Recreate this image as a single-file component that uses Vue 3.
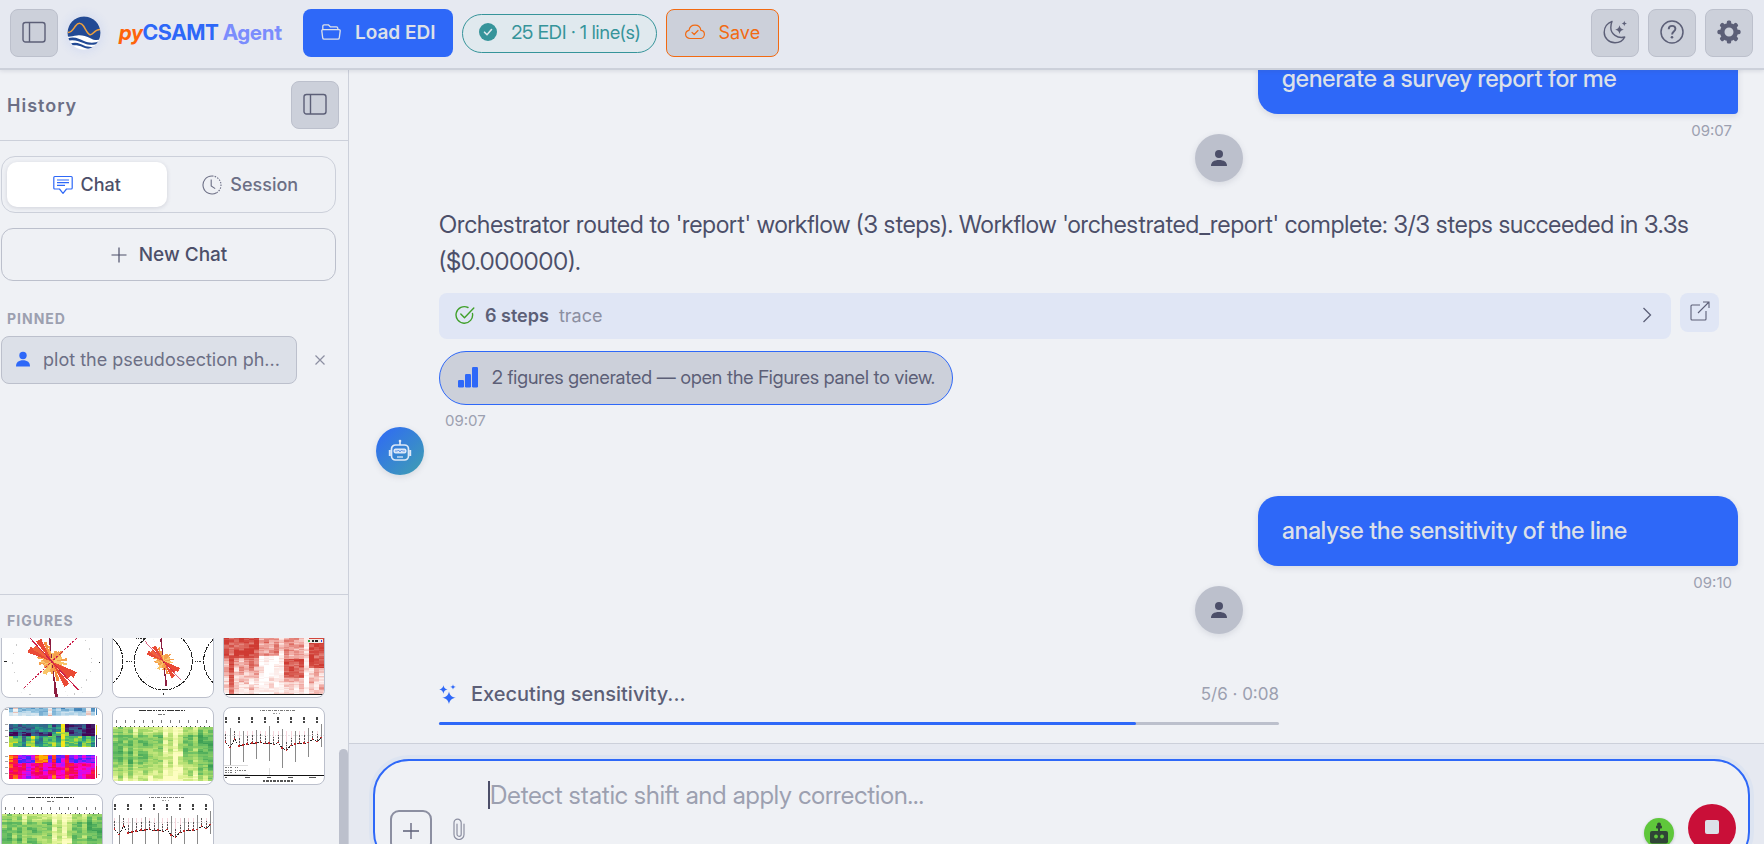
<script setup>
import { ref } from 'vue'

const tab = ref('chat')
const draft = ref('')

const progress = { done: 5, total: 6, elapsed: '0:08' }

/* ---------- thumbnail plots ---------- */

// small seeded generator, so the plots are stable between renders
function seeded(seed) {
  let s = seed
  return () => {
    s = (s * 1664525 + 1013904223) % 4294967296
    return s / 4294967296
  }
}

function mix(a, b, t) {
  const pa = [1, 3, 5].map((i) => parseInt(a.slice(i, i + 2), 16))
  const pb = [1, 3, 5].map((i) => parseInt(b.slice(i, i + 2), 16))
  return `rgb(${pa.map((v, i) => Math.round(v + (pb[i] - v) * t)).join(',')})`
}

function ramp(colors, v) {
  const t = Math.max(0, Math.min(0.999, v)) * (colors.length - 1)
  const i = Math.floor(t)
  return mix(colors[i], colors[i + 1], t - i)
}

function heat({ x, y, w, h, cols, rows, seed, colors, value }) {
  const rnd = seeded(seed)
  const cells = []
  for (let c = 0; c < cols; c++) {
    let drift = 0
    for (let r = 0; r < rows; r++) {
      drift = drift * 0.6 + (rnd() - 0.5) * 0.35
      cells.push({
        x: x + (c * w) / cols,
        y: y + (r * h) / rows,
        w: w / cols + 0.5,
        h: h / rows + 0.5,
        fill: ramp(colors, value(c / cols, r / rows, c) + drift)
      })
    }
  }
  return cells
}

const greenCols = [0.6, 0.75, 0.5, 0.65, 0.5, 0.65, 0.62, 0.45, 0.5, 0.55, 0.15, 0.35, 0.08, 0.2, 0.62, 0.6, 0.45, 0.8, 0.72, 0.88]
const green = heat({
  x: 0, y: 57, w: 300, h: 162, cols: 20, rows: 34, seed: 7,
  colors: ['#fdfdc0', '#d9ef8b', '#a6d96a', '#66bd63', '#3c9f55'],
  value: (u, v, c) => greenCols[c] + (v < 0.12 ? -0.15 : 0.06) - Math.max(0, v - 0.6) * 1.1
})

const red = heat({
  x: 0, y: 0, w: 300, h: 219, cols: 20, rows: 60, seed: 21,
  colors: ['#ffffff', '#fbe3df', '#f0a9a2', '#dc6a60', '#cf3a32'],
  value: (u, v, c) => {
    if (c === 1) return 0.85
    if (u < 0.35) return v < 0.5 ? 0.9 : 0.62 - (v - 0.5) * 0.9
    if (u < 0.52) return v < 0.48 ? 0.6 : 0.08
    if (c === 11 || c === 16) return 0.2
    if (u > 0.82) return v < 0.65 ? 0.88 : 0.35
    return v > 0.5 && v < 0.78 ? 0.85 : 0.5 - Math.max(0, v - 0.78) * 1.5
  }
})

const strips = [
  ...heat({
    x: 21, y: 0, w: 258, h: 24, cols: 20, rows: 6, seed: 5,
    colors: ['#3d7fb5', '#8fc1de', '#c9e0ee', '#f4f4f4', '#d8745c'],
    value: (u, v, c) => (c === 1 || c === 9 || c === 18 ? 0.85 : 0.15 + v * 0.45)
  }),
  ...heat({
    x: 21, y: 48, w: 258, h: 69, cols: 20, rows: 18, seed: 11,
    colors: ['#440154', '#3b528b', '#21918c', '#5ec962', '#f4e61e'],
    value: (u, v, c) => {
      if (c === 12) return 1
      if (v > 0.3 && v < 0.5) return c > 9 && c < 14 ? 0.8 : 0.12
      if (v < 0.3) return u > 0.55 ? 0.12 : 0.4
      return 0.7 + (c % 5 === 0 ? 0.25 : 0) - (c % 4 === 3 ? 0.2 : 0)
    }
  }),
  ...heat({
    x: 21, y: 141, w: 258, h: 72, cols: 20, rows: 18, seed: 31,
    colors: ['#ffb000', '#ff2a2a', '#f00060', '#ff00c8', '#c010ff', '#3030ff'],
    value: (u, v, c) => {
      if (c < 2 || c === 10 || c === 13) return 0.25
      if (v < 0.3) return u > 0.25 && u < 0.45 ? 0.05 : 0.88
      return 0.5 + (c % 4 === 0 ? 0.2 : 0)
    }
  })
]

// rose diagram petals: angle in degrees, length, half width, colour
const petals = []
const petalRnd = seeded(3)
for (let a = 0; a < 360; a += 9) {
  petals.push([a, 22 + petalRnd() * 26, 4, petalRnd() > 0.5 ? '#f9c56a' : '#f5a04c'])
}
petals.push(
  [208, 78, 10, '#ea4a35'], [220, 68, 9, '#f0623b'], [238, 76, 9, '#ea4a35'], [250, 62, 5, '#f5903f'],
  [30, 80, 10, '#ea4a35'], [42, 70, 10, '#ea4a35'], [58, 84, 9, '#ea4a35'], [72, 60, 5, '#f5903f'],
  [264, 100, 4, '#8c1d40'], [83, 112, 5, '#8c1d40']
)
function petal([deg, len, half]) {
  const a = (deg * Math.PI) / 180
  const c = Math.cos(a)
  const s = Math.sin(a)
  return `0,0 ${c * len - s * half},${s * len + c * half} ${c * len + s * half},${s * len - c * half}`
}

const points = [
  [5, 103], [19, 119], [32, 93], [45, 115], [58, 111], [70, 109], [84, 106], [97, 105], [110, 103], [123, 107],
  [136, 106], [149, 110], [162, 104], [175, 121], [188, 126], [201, 113], [214, 108], [227, 106], [240, 106],
  [253, 104], [266, 93], [279, 101], [292, 89]
]
const bars = [
  [19, 59, 170], [58, 69, 162], [97, 66, 153], [136, 54, 158], [175, 64, 179], [214, 69, 162], [253, 59, 146], [292, 49, 116]
]
const curve = points.map((p) => p.join(',')).join(' ')

const figures = [
  { id: 1, kind: 'rose', label: 'Rose diagram' },
  { id: 2, kind: 'roses', label: 'Rose diagrams by band' },
  { id: 3, kind: 'red', label: 'Skew section' },
  { id: 4, kind: 'strips', label: 'Multi-parameter section' },
  { id: 5, kind: 'green', label: 'Pseudosection' },
  { id: 6, kind: 'curve', label: 'Station profile' },
  { id: 7, kind: 'green', label: 'Pseudosection copy' },
  { id: 8, kind: 'curve', label: 'Station profile copy' }
]
</script>

<template>
  <div class="app">
    <header class="topbar">
      <button class="icon-btn" type="button" aria-label="Toggle sidebar">
        <svg class="i24" viewBox="0 0 24 24" fill="none" stroke="currentColor" stroke-width="1.4">
          <rect x="1" y="2.5" width="22" height="19.5" rx="2.5" /><path d="M7.5 2.5v19.5" />
        </svg>
      </button>
      <div class="brand">
        <svg class="logo" viewBox="0 0 34 34" aria-hidden="true">
          <defs><clipPath id="logo-clip"><circle cx="17" cy="17" r="16.5" /></clipPath></defs>
          <g clip-path="url(#logo-clip)">
            <rect width="34" height="34" fill="#fff" />
            <path d="M0 0h34v23c-4 2-7 1-10-.5-6-3-10-3.500-14-3-4 .5-7 1.500-10 1z" fill="#234a94" />
            <path d="M0 22.500c8-2.500 12 .5 17 2.500s10 2.500 17-.5v2c-6 3-12 3-17 .8S6 23 0 25z" fill="#234a94" />
            <path d="M3 27.500c7-2 10 .3 14 2s9 2 13 .5l-3 2.500c-4 .7-7 .3-11-1.300s-7-2.200-12-1.700z" fill="#234a94" />
            <path d="M1 16.500c4 0 5-3 7.500-6.500 3-4 6-3 8 0 2.500 4 4 7.500 6 8.500 4 1.500 4-5.500 11-5" fill="none" stroke="#efa03d" stroke-width="1.500" />
          </g>
        </svg>
        <div class="brand-name"><em>py</em>CSAMT <span>Agent</span></div>
      </div>
      <button class="load-btn" type="button">
        <svg class="i20" viewBox="0 0 20 20" fill="none" stroke="currentColor" stroke-width="1.3" stroke-linejoin="round">
          <path d="M1.800 8V4.200c0-.8.500-1.400 1.300-1.400h4.200l2 2h6c.9 0 1.500.6 1.500 1.400V8" />
          <path d="M2 7.600h16c.8 0 1.300.6 1.200 1.300l-.9 7c-.1.800-.7 1.300-1.500 1.300H3.200c-.8 0-1.400-.5-1.500-1.300l-.9-7C.7 8.200 1.200 7.600 2 7.600z" />
        </svg>
        Load EDI
      </button>
      <div class="status-pill">
        <svg class="i18" viewBox="0 0 18 18"><circle cx="9" cy="9" r="9" fill="currentColor" /><path d="M5.500 9.200l2.500 2.500 4.500-5.200" fill="none" stroke="#e0e9ee" stroke-width="1.600" stroke-linecap="round" /></svg>
        25 EDI · 1 line(s)
      </div>
      <button class="save-btn" type="button">
        <svg class="i20" viewBox="0 0 20 20" fill="none" stroke="currentColor" stroke-width="1.200" stroke-linecap="round" stroke-linejoin="round">
          <path d="M5 16.500c-2.400 0-4.400-1.800-4.400-4.100 0-2 1.500-3.600 3.400-4C4.500 5.200 7 3.200 10 3.200c3.100 0 5.500 2.200 5.900 5.100 2 .2 3.500 1.800 3.500 4 0 2.300-1.900 4.200-4.200 4.200z" />
          <path d="M7 10.300l2.200 2.200 3.800-4" />
        </svg>
        Save
      </button>
      <div class="top-actions">
        <button class="icon-btn" type="button" aria-label="Dark mode">
          <svg class="i24" viewBox="0 0 24 24" fill="none" stroke="currentColor" stroke-width="1.400" stroke-linejoin="round">
            <path d="M9 1.500C4.500 3 1.200 7.200 1.200 12.200c0 6 4.900 10.600 10.800 10.600 4.300 0 8-2.300 9.800-5.800-7.500 2-14-3-14-9.500 0-2.200.4-4.200 1.200-6z" />
            <path fill="currentColor" stroke="none" d="M16.500 5.300c.7 2.900 1.500 3.700 4.300 4.400-2.800.7-3.600 1.500-4.300 4.400-.7-2.900-1.500-3.700-4.300-4.400 2.800-.7 3.600-1.500 4.300-4.400zM21.300.8c.5 1.800.9 2.300 2.700 2.800-1.800.5-2.200.9-2.700 2.700-.5-1.800-.9-2.200-2.700-2.700 1.800-.5 2.200-1 2.700-2.800z" />
          </svg>
        </button>
        <button class="icon-btn" type="button" aria-label="Help">
          <svg class="i24" viewBox="0 0 24 24" fill="none" stroke="currentColor" stroke-width="1.500">
            <circle cx="12" cy="12" r="11" /><path d="M8.700 9.200c.1-2.200 1.500-3.300 3.400-3.300s3.300 1.200 3.300 2.900c0 2.600-3.300 2.800-3.300 5.600" stroke-width="1.900" /><circle cx="12" cy="17.300" r="1.300" fill="currentColor" stroke="none" />
          </svg>
        </button>
        <button class="icon-btn" type="button" aria-label="Settings">
          <svg class="i24" viewBox="0 0 24 24" fill="none">
            <g fill="currentColor">
              <rect v-for="n in 8" :key="n" x="9.800" y="0.400" width="4.400" height="6" rx="1.600" :transform="`rotate(${n * 45} 12 12)`" />
            </g>
            <circle cx="12" cy="12" r="6.800" stroke="currentColor" stroke-width="4.600" />
          </svg>
        </button>
      </div>
    </header>

    <div class="body">
      <aside class="sidebar">
        <div class="side-head">
          <h2>History</h2>
          <button class="icon-btn" type="button" aria-label="Collapse history">
            <svg class="i24" viewBox="0 0 24 24" fill="none" stroke="currentColor" stroke-width="1.400">
              <rect x="1" y="2.500" width="22" height="19.500" rx="2.500" /><path d="M7.500 2.500v19.500" />
            </svg>
          </button>
        </div>

        <div class="history">
          <div class="tabs">
            <button type="button" :class="{ active: tab === 'chat' }" @click="tab = 'chat'">
              <svg class="i20" viewBox="0 0 20 20" fill="none" stroke="currentColor" stroke-width="1.200" stroke-linejoin="round">
                <path d="M1.800 1.500h16.400c.6 0 1 .4 1 1v10.500c0 .6-.4 1-1 1h-4.700L10 18.300 6.500 14H1.800c-.6 0-1-.4-1-1V2.500c0-.6.400-1 1-1z" />
                <path d="M4 5h12M4 7.700h12M4 10.400h8" />
              </svg>
              Chat
            </button>
            <button type="button" :class="{ active: tab === 'session' }" @click="tab = 'session'">
              <svg class="i20" viewBox="0 0 20 20" fill="none" stroke="currentColor" stroke-width="1.100">
                <path d="M10 1a9 9 0 1 0 4.500 16.800" /><path d="M10 1a9 9 0 0 1 4.500 16.800" stroke-dasharray="1.500 1.200" /><path d="M9.200 4.500v6.500l4 2.600" />
              </svg>
              Session
            </button>
          </div>

          <button class="new-chat" type="button">
            <svg class="i18" viewBox="0 0 18 18" stroke="currentColor" stroke-width="1.200"><path d="M9 1.500v15M1.500 9h15" /></svg>
            New Chat
          </button>

          <h3>PINNED</h3>
          <div class="pinned">
            <button class="pinned-item" type="button">
              <svg class="i16" viewBox="0 0 16 16" fill="#2e68f8"><circle cx="8" cy="4.500" r="3.700" /><path d="M1 15.500c0-4 2.500-6.200 7-6.200s7 2.200 7 6.200z" /></svg>
              <span>plot the pseudosection ph...</span>
            </button>
            <button class="unpin" type="button" aria-label="Unpin">
              <svg viewBox="0 0 12 12" stroke="currentColor" stroke-width="1.200"><path d="M1.500 1.500l9 9M10.500 1.500l-9 9" /></svg>
            </button>
          </div>
        </div>

        <section class="figures">
          <h3>FIGURES</h3>
          <div class="fig-scroll">
            <div class="fig-grid">
              <button v-for="f in figures" :key="f.id" class="fig" type="button" :aria-label="f.label">
                <svg viewBox="0 0 300 228" shape-rendering="crispEdges">
                  <template v-if="f.kind === 'rose' || f.kind === 'roses'">
                    <template v-if="f.kind === 'roses'">
                      <circle v-for="cx in [-57, 151, 359]" :key="cx" :cx="cx" cy="120" r="87" fill="none" stroke="#222" stroke-width="3" stroke-dasharray="9 2" />
                      <path d="M40 120h20M245 120h20M151 217v6M68 52h34" stroke="#333" stroke-width="3" stroke-dasharray="4 3" />
                    </template>
                    <circle v-else cx="150" cy="122" r="118" fill="none" stroke="#c9c9c9" stroke-width="3" stroke-dasharray="4 24" />
                    <path v-if="f.kind === 'rose'" d="M6 121h9M290 124h4" stroke="#222" stroke-width="3" />
                    <g :transform="f.kind === 'rose' ? 'translate(150 122)' : 'translate(151 120) scale(.68)'">
                      <path d="M-96-96L96 96M96-96L-96 96M-60-130L60 130" stroke="#e4e4e4" stroke-width="2" stroke-dasharray="3 9" />
                      <polygon v-for="(p, i) in petals" :key="i" :points="petal(p)" :fill="p[3]" />
                      <path d="M-84-90L80 86" stroke="#cc1f4c" stroke-width="3" />
                      <path v-if="f.kind === 'rose'" d="M-84 78L78-74" stroke="#cc1f4c" stroke-width="3" stroke-dasharray="7 4" />
                    </g>
                  </template>

                  <template v-else-if="f.kind === 'red'">
                    <rect v-for="(c, i) in red" :key="i" :x="c.x" :y="c.y" :width="c.w" :height="c.h" :fill="c.fill" />
                    <rect x="248" y="53" width="50" height="14" fill="#f2ece6" />
                    <path d="M252 60h6" stroke="#35a046" stroke-width="6" />
                    <path d="M264 60h22" stroke="#222" stroke-width="4" stroke-dasharray="7 3" />
                    <path d="M290 60h5" stroke="#2d48e0" stroke-width="6" />
                    <path d="M0 221h300" stroke="#111" stroke-width="3" />
                  </template>

                  <template v-else-if="f.kind === 'strips'">
                    <rect v-for="(c, i) in strips" :key="i" :x="c.x" :y="c.y" :width="c.w" :height="c.h" :fill="c.fill" />
                    <path d="M284 0v20" stroke="#3a80b8" stroke-width="3" />
                    <path d="M284 50v32" stroke="#e8de20" stroke-width="3" /><path d="M284 82v34" stroke="#3a2a70" stroke-width="3" />
                    <path d="M284 144v30" stroke="#f020c0" stroke-width="3" /><path d="M284 174v36" stroke="#e02020" stroke-width="3" />
                    <path d="M9 4h9M9 50h9M9 66h9M9 84h9M9 102h9M9 144h9M9 160h9M9 178h9M9 196h9M288 92h8M288 200h6" stroke="#777" stroke-width="2" stroke-dasharray="5 2" />
                  </template>

                  <template v-else-if="f.kind === 'green'">
                    <path d="M78 8h138" stroke="#333" stroke-width="4" stroke-dasharray="11 2 7 3 3 2" />
                    <path d="M134 18h26" stroke="#777" stroke-width="3" stroke-dasharray="6 2" />
                    <path v-for="n in 11" :key="n" :d="`M${n * 27 - 17} 35v10`" stroke="#777" stroke-width="3" />
                    <path d="M8 54h290" stroke="#444" stroke-width="3" stroke-dasharray="3 11" />
                    <rect v-for="(c, i) in green" :key="i" :x="c.x" :y="c.y" :width="c.w" :height="c.h" :fill="c.fill" />
                  </template>

                  <template v-else>
                    <path d="M108 8h106" stroke="#777" stroke-width="3" stroke-dasharray="3 4 8 3" />
                    <path d="M148 17h24" stroke="#999" stroke-width="3" stroke-dasharray="4 4" />
                    <path v-for="n in 8" :key="n" :d="`M${n * 39 - 33} 26v19`" stroke="#444" stroke-width="4" stroke-dasharray="3 1" />
                    <path d="M0 83h300" stroke="#d8d8d8" stroke-width="2" stroke-dasharray="5 3" />
                    <path v-for="(p, i) in points" :key="'p' + i" :d="`M${p[0]} 68V${p[1]}`" stroke="#f6d5dc" stroke-width="3" />
                    <path v-for="(p, i) in points" :key="'k' + i" :d="`M${p[0]} ${p[1] - 24}v22`" stroke="#555" stroke-width="3" stroke-dasharray="5 3" />
                    <path v-for="b in bars" :key="b[0]" :d="`M${b[0]} ${b[1]}V${b[2]}`" stroke="#8a8a8a" stroke-width="3" />
                    <path d="M136 179v22" stroke="#ddd" stroke-width="3" />
                    <polyline :points="curve" fill="none" stroke="#222" stroke-width="3" stroke-dasharray="6 4" />
                    <rect v-for="p in points" :key="p[0]" :x="p[0] - 3" :y="p[1] - 3" width="5" height="5" fill="#c42a2a" />
                    <path d="M0 172h72M0 198h72" stroke="#ccc" stroke-width="2" />
                    <path d="M4 179h42M4 187h66M4 194h34" stroke="#777" stroke-width="3" stroke-dasharray="5 3 2 4" />
                    <path d="M0 202h300" stroke="#111" stroke-width="3" />
                    <path d="M4 209h6M64 209h14M130 209h10M192 209h16M256 209h20" stroke="#555" stroke-width="4" />
                    <path d="M116 219h92" stroke="#555" stroke-width="4" stroke-dasharray="6 3 10 2" />
                  </template>
                </svg>
              </button>
            </div>
            <div class="fig-track"><div class="fig-thumb"></div></div>
          </div>
        </section>
      </aside>

      <main class="main">
        <div class="messages">
          <article class="msg user">
            <div class="bubble">generate a survey report for me</div>
            <time>09:07</time>
            <div class="avatar">
              <svg class="i18" viewBox="0 0 18 18" fill="currentColor"><circle cx="9" cy="5" r="4" /><path d="M1 17c0-4 3-6 8-6s8 2 8 6z" /></svg>
            </div>
          </article>

          <article class="msg bot">
            <div class="answer">
              <p>Orchestrator routed to 'report' workflow (3 steps). Workflow 'orchestrated_report' complete: 3/3 steps succeeded in 3.3s ($0.000000).</p>
              <div class="trace-row">
                <button class="trace" type="button">
                  <svg class="i20" viewBox="0 0 20 20" fill="none" stroke="#40a02b" stroke-width="1.400" stroke-linecap="round" stroke-linejoin="round">
                    <path d="M17.500 8.500a8.300 8.300 0 1 1-4.500-6" /><path d="M5.800 9l3.700 3.800L18.800 3" />
                  </svg>
                  <strong>6 steps</strong>
                  <span>trace</span>
                  <svg class="i16 chevron" viewBox="0 0 16 16" fill="none" stroke="currentColor" stroke-width="1.300"><path d="M4.500 1l7 7-7 7" /></svg>
                </button>
                <button class="open-btn" type="button" aria-label="Open trace">
                  <svg class="i20" viewBox="0 0 20 20" fill="none" stroke="currentColor" stroke-width="1.100">
                    <path d="M10 4H2c-.6 0-1 .4-1 1v13c0 .6.400 1 1 1h13c.6 0 1-.4 1-1v-8" /><path d="M8 12L19 1M13 1h6v6" />
                  </svg>
                </button>
              </div>
              <button class="fig-chip" type="button">
                <svg class="i22" viewBox="0 0 22 22" fill="#2e68f8"><rect x="1" y="14" width="6" height="7.500" rx="1.200" /><rect x="8" y="8" width="6" height="13.500" rx="1.200" /><rect x="15" y="1" width="6" height="20.500" rx="1.200" /></svg>
                2 figures generated — open the Figures panel to view.
              </button>
              <time>09:07</time>
            </div>
            <div class="avatar">
              <svg class="i24" viewBox="0 0 24 24" fill="none" stroke="#dce8f8" stroke-width="1.700">
                <path d="M12 2.500V6" /><circle cx="12" cy="2" r="1.300" fill="#dce8f8" stroke="none" />
                <rect x="3.500" y="6" width="17" height="15" rx="4" /><path d="M1.800 11v6M22.200 11v6" stroke-width="2" />
                <rect x="5.500" y="9.500" width="13" height="5" rx="2" fill="#dce8f8" stroke="none" /><path d="M7 12h2.500l1-1 1.500 2 1.500-2 1 1H17" stroke="#3f7fe0" stroke-width=".8" /><path d="M9 18h6" stroke-width="1.300" />
              </svg>
            </div>
          </article>

          <article class="msg user">
            <div class="bubble">analyse the sensitivity of the line</div>
            <time>09:10</time>
            <div class="avatar">
              <svg class="i18" viewBox="0 0 18 18" fill="currentColor"><circle cx="9" cy="5" r="4" /><path d="M1 17c0-4 3-6 8-6s8 2 8 6z" /></svg>
            </div>
          </article>

          <div class="running">
            <div class="running-head">
              <svg class="i20" viewBox="0 0 20 20" fill="#2e68f8">
                <path d="M10 7.500c1 4.100 2.400 5.400 6.800 6.300-4.400.9-5.800 2.200-6.800 6.200-1-4-2.400-5.300-6.800-6.200 4.400-.9 5.800-2.200 6.800-6.300z" />
                <path d="M4.400 1.300c.6 2.700 1.500 3.500 4.200 4.200-2.700.6-3.600 1.500-4.200 4.200C3.800 7 2.900 6.100.2 5.500c2.700-.7 3.600-1.500 4.200-4.200zM14 .2c.4 1.800.9 2.300 2.800 2.700-1.900.4-2.400.9-2.800 2.700-.4-1.800-.9-2.300-2.800-2.700 1.900-.4 2.400-.9 2.800-2.700z" />
              </svg>
              <span class="running-label">Executing sensitivity...</span>
              <span class="running-time">{{ progress.done }}/{{ progress.total }} · {{ progress.elapsed }}</span>
            </div>
            <div class="bar"><div class="bar-fill" :style="{ width: Math.floor((progress.done / progress.total) * 100) + '%' }"></div></div>
          </div>
        </div>

        <div class="composer-wrap">
          <form class="composer" @submit.prevent>
            <button class="add-btn" type="button" aria-label="Add">
              <svg class="i18" viewBox="0 0 18 18" stroke="currentColor" stroke-width="1.300"><path d="M9 1v16M1 9h16" /></svg>
            </button>
            <button class="clip-btn" type="button" aria-label="Attach file">
              <svg viewBox="0 0 12 22" fill="none" stroke="currentColor" stroke-width="1.200" stroke-linecap="round">
                <path d="M11 6v10.500a5 5 0 0 1-10 0V4.800a3.600 3.600 0 0 1 7.200 0v11.400a2.100 2.100 0 0 1-4.200 0V6" />
              </svg>
            </button>
            <div class="draft">
              <span v-if="!draft" class="caret"></span>
              <textarea v-model="draft" rows="2" aria-label="Message" placeholder="Detect static shift and apply correction..."></textarea>
            </div>
            <button class="agent-btn" type="button" aria-label="Agent mode">
              <svg class="i22" viewBox="0 0 22 22" fill="#2f4536">
                <rect x="2" y="9" width="18" height="12.500" rx="2" /><rect x="10" y="5" width="2" height="5" /><rect x="8" y="3.500" width="6" height="3" rx="1" /><circle cx="11" cy="2.500" r="2" />
                <circle cx="8" cy="14.500" r="1.900" fill="#5fc73b" /><circle cx="14" cy="14.500" r="1.900" fill="#5fc73b" />
              </svg>
            </button>
            <button class="stop-btn" type="button" aria-label="Stop"><span></span></button>
          </form>
        </div>
      </main>
    </div>
  </div>
</template>

<style>
body {
  overflow: hidden;
  background: #eff1f5;
}
</style>

<style scoped>
/* the shell is a little taller than the window: the composer runs off the bottom */
.app {
  display: flex;
  flex-direction: column;
  height: calc(100vh + 36px);
  font-family: Inter, "Liberation Sans", sans-serif;
  font-size: 18px;
  color: #4c4f69;
}
.app * {
  box-sizing: border-box;
}
button {
  font: inherit;
  color: inherit;
  margin: 0;
  padding: 0;
  border: none;
  background: none;
  cursor: pointer;
}
svg {
  display: block;
  flex: none;
}
.i16 { width: 16px; height: 16px; }
.i18 { width: 18px; height: 18px; }
.i20 { width: 20px; height: 20px; }
.i22 { width: 22px; height: 22px; }
.i24 { width: 24px; height: 24px; }

.brand-name,
.status-pill,
.fig-chip,
.bubble,
.answer p,
textarea {
  font-family: "Inter Display", Inter, "Liberation Sans", sans-serif;
}

/* ── top bar ── */
.topbar {
  position: relative;
  z-index: 2;
  flex: none;
  display: flex;
  align-items: center;
  height: 70px;
  padding: 0 11px 2px 10px;
  background: #e6e9f1;
  border-bottom: 2px solid #ccd0da;
  box-shadow: 0 1px 4px rgba(76, 79, 105, 0.15);
}
.icon-btn {
  display: flex;
  align-items: center;
  justify-content: center;
  width: 48px;
  height: 48px;
  padding-bottom: 2px;
  border: 1px solid #bcc0cc;
  border-radius: 8px;
  background: #ccd0da;
  color: #5c5f77;
}
.brand {
  display: flex;
  align-items: center;
  gap: 18px;
  margin: 0 21px 0 9px;
}
.logo {
  width: 34px;
  height: 34px;
  border-radius: 50%;
  box-shadow: 0 0 12px rgba(46, 104, 248, 0.12);
}
.brand-name {
  padding-bottom: 2px;
  font-size: 21px;
  font-weight: 700;
  color: #2e68f8;
}
.brand-name em {
  color: #fe640b;
}
.brand-name span {
  color: #7b8dfd;
}
.load-btn,
.save-btn {
  display: flex;
  align-items: center;
  height: 48px;
  padding: 0 18px 2px;
  border-radius: 8px;
}
.load-btn {
  gap: 14px;
  background: #2e68f8;
  color: #dce0e8;
  font-size: 19px;
  font-weight: 600;
}
.status-pill {
  display: flex;
  align-items: center;
  gap: 14px;
  height: 39px;
  margin: 0 9px;
  padding: 0 16px 2px;
  border: 1px solid #36949a;
  border-radius: 20px;
  background: #e0e9ee;
  color: #36949a;
  font-size: 19px;
}
.save-btn {
  gap: 13px;
  border: 1px solid #f26a12;
  background: #ccd0da;
  color: #f26a12;
}
.top-actions {
  display: flex;
  gap: 9px;
  margin-left: auto;
}

/* ── sidebar ── */
.body {
  flex: 1;
  display: flex;
  min-height: 0;
}
.sidebar {
  flex: none;
  display: flex;
  flex-direction: column;
  width: 349px;
  border-right: 1px solid #ccd0da;
}
.side-head {
  display: flex;
  align-items: center;
  justify-content: space-between;
  height: 71px;
  padding: 0 9px 0 7px;
  border-bottom: 1px solid #ccd0da;
}
h2 {
  margin: 0;
  font-size: 18px;
  font-weight: 600;
  letter-spacing: 1px;
  color: #6c6f85;
}
h3 {
  margin: 0;
  padding-left: 7px;
  font-size: 14px;
  line-height: 18px;
  font-weight: 700;
  letter-spacing: 1px;
  color: #9ca0b0;
}
.history {
  flex: 1;
  min-height: 0;
  padding: 15px 12px 0 1px;
}
.history h3 {
  padding-left: 6px;
}
.tabs {
  display: flex;
  gap: 4px;
  padding: 5px;
  border: 1px solid #ccd0da;
  border-radius: 14px;
}
.tabs button {
  flex: 1;
  display: flex;
  align-items: center;
  justify-content: center;
  gap: 8px;
  height: 45px;
  border-radius: 10px;
  font-weight: 500;
  color: #6c6f85;
}
.tabs .active {
  background: #fff;
  color: #4c4f69;
  box-shadow: 0 1px 4px rgba(76, 79, 105, 0.18);
}
.tabs .active svg {
  color: #2e68f8;
}
.new-chat {
  display: flex;
  align-items: center;
  justify-content: center;
  gap: 11px;
  width: 100%;
  height: 53px;
  margin: 15px 0 29px;
  border: 1px solid #bcc0cc;
  border-radius: 12px;
  font-size: 19px;
  font-weight: 500;
}
.pinned {
  display: flex;
  align-items: center;
  gap: 17px;
  margin-top: 8px;
}
.pinned-item {
  display: flex;
  align-items: center;
  gap: 12px;
  width: 296px;
  height: 48px;
  padding: 0 13px 2px;
  border: 1px solid #bcc0cc;
  border-radius: 8px;
  background: #dce0e8;
  color: #6c6f85;
  white-space: nowrap;
}
.unpin svg {
  width: 12px;
  height: 12px;
  color: #8c8fa1;
}
.figures {
  flex: none;
  display: flex;
  flex-direction: column;
  height: 286px;
  padding-top: 17px;
  border-top: 1px solid #ccd0da;
}
.fig-scroll {
  flex: 1;
  display: flex;
  justify-content: space-between;
  min-height: 0;
  margin-top: 8px;
  padding-left: 1px;
  overflow: hidden;
}
.fig-grid {
  display: flex;
  flex-wrap: wrap;
  align-content: flex-start;
  gap: 9px;
  width: 326px;
  margin-top: -18px;
}
.fig {
  width: 102px;
  height: 78px;
  overflow: hidden;
  border: 1px solid #bcc0cc;
  border-radius: 8px;
  background: #fff;
}
.fig svg {
  width: 100%;
  height: 100%;
}
.fig-track {
  width: 9px;
  padding-top: 111px;
}
.fig-thumb {
  height: 100%;
  border-radius: 5px;
  background: #bcc0cc;
}

/* ── conversation ── */
.main {
  flex: 1;
  display: flex;
  flex-direction: column;
  min-width: 0;
}
.messages {
  flex: 1;
  display: flex;
  flex-direction: column;
  justify-content: flex-end;
  min-height: 0;
  padding: 0 26px 18px 27px;
  overflow: hidden;
}
.msg {
  display: flex;
  flex-direction: column;
}
time {
  font-size: 15px;
  line-height: 20px;
  color: #9ca0b0;
}
.avatar {
  display: flex;
  align-items: center;
  justify-content: center;
  width: 48px;
  height: 48px;
  border-radius: 50%;
  background: #bcc0cc;
  box-shadow: 0 2px 6px rgba(76, 79, 105, 0.15);
}
.user {
  align-self: flex-end;
  width: 543px;
}
.bubble {
  margin-left: 63px;
  padding: 16px 24px;
  border-radius: 20px 20px 4px 20px;
  background: #2e68f8;
  color: #dce0e8;
  font-size: 24px;
  line-height: 38px;
  font-weight: 500;
  box-shadow: 0 2px 6px rgba(76, 79, 105, 0.15);
}
.user time {
  align-self: flex-end;
  margin: 7px 6px 0 0;
}
.user .avatar {
  margin-top: -7px;
}
.bot {
  margin: 24px 0 21px;
}
.answer {
  display: flex;
  flex-direction: column;
  align-items: flex-start;
  margin-left: 63px;
  margin-right: 19px;
}
.answer p {
  margin: 0 0 13px;
  font-size: 24px;
  line-height: 37px;
}
.trace-row {
  display: flex;
  align-items: flex-start;
  gap: 9px;
  width: 100%;
  margin-bottom: 12px;
}
.trace {
  flex: 1;
  display: flex;
  align-items: center;
  gap: 10px;
  height: 46px;
  padding: 0 16px 2px;
  border-radius: 8px;
  background: #e0e6f5;
  color: #5c5f77;
}
.trace strong {
  font-weight: 600;
}
.trace span {
  color: #8c8fa1;
}
.chevron {
  margin-left: auto;
}
.open-btn {
  display: flex;
  align-items: center;
  justify-content: center;
  width: 39px;
  height: 39px;
  padding-bottom: 3px;
  border-radius: 8px;
  background: #e0e6f5;
  color: #5c5f77;
}
.fig-chip {
  display: flex;
  align-items: center;
  gap: 13px;
  height: 54px;
  padding: 0 17px 2px;
  border: 1px solid #2e68f8;
  border-radius: 27px;
  background: #ccd0da;
  color: #5c5f77;
  font-size: 19px;
}
.answer time {
  margin: 6px 0 0 6px;
}
.bot .avatar {
  margin-top: -4px;
  background: linear-gradient(135deg, #2e68f8, #40a0b0);
}
.running {
  width: 840px;
  max-width: 100%;
  margin: 46px 0 0 63px;
}
.running-head {
  display: flex;
  align-items: center;
  gap: 12px;
  height: 28px;
}
.running-label {
  font-size: 20px;
  font-weight: 500;
  color: #5c5f77;
}
.running-time {
  margin-left: auto;
  font-size: 17px;
  color: #9ca0b0;
}
.bar {
  height: 3px;
  margin-top: 14px;
  border-radius: 2px;
  background: #bcc0cc;
}
.bar-fill {
  height: 100%;
  border-radius: 2px;
  background: #2e68f8;
}

/* ── composer ── */
.composer-wrap {
  flex: none;
  height: 137px;
  padding: 15px 14px 12px 24px;
  border-top: 1px solid #ccd0da;
  background: #e6e9f1;
}
.composer {
  display: flex;
  align-items: flex-end;
  height: 109px;
  padding: 0 12px 14px 15px;
  border: 2px solid #2e68f8;
  border-radius: 36px;
  background: #eff1f5;
  box-shadow: 0 0 0 4px #dde4f1;
}
.add-btn {
  display: flex;
  align-items: center;
  justify-content: center;
  width: 42px;
  height: 42px;
  border: 2px solid #8c8fa1;
  border-radius: 9px;
  color: #5c5f77;
}
.clip-btn {
  display: flex;
  align-items: center;
  justify-content: center;
  width: 54px;
  height: 46px;
  color: #8c8fa1;
}
.clip-btn svg {
  width: 12px;
  height: 22px;
}
.draft {
  flex: 1;
  display: flex;
  min-width: 0;
  height: 73px;
  padding-left: 2px;
}
.caret {
  flex: none;
  width: 2px;
  height: 28px;
  margin-top: 2px;
  background: #4c4f69;
}
textarea {
  flex: 1;
  min-width: 0;
  margin: 0;
  padding: 0;
  border: none;
  outline: none;
  resize: none;
  background: none;
  font-size: 25px;
  line-height: 32px;
  color: #4c4f69;
}
textarea::placeholder {
  color: #9ca0b0;
}
.agent-btn {
  display: flex;
  align-items: center;
  justify-content: center;
  width: 30px;
  height: 30px;
  margin: 0 14px 4px 0;
  border-radius: 50%;
  background: #5fc73b;
  box-shadow: 0 1px 3px rgba(76, 79, 105, 0.3);
}
.stop-btn {
  display: flex;
  align-items: center;
  justify-content: center;
  width: 48px;
  height: 48px;
  padding-bottom: 2px;
  border-radius: 50%;
  background: #c90f38;
}
.stop-btn span {
  width: 14px;
  height: 14px;
  border-radius: 2px;
  background: #dce0e8;
}
</style>
